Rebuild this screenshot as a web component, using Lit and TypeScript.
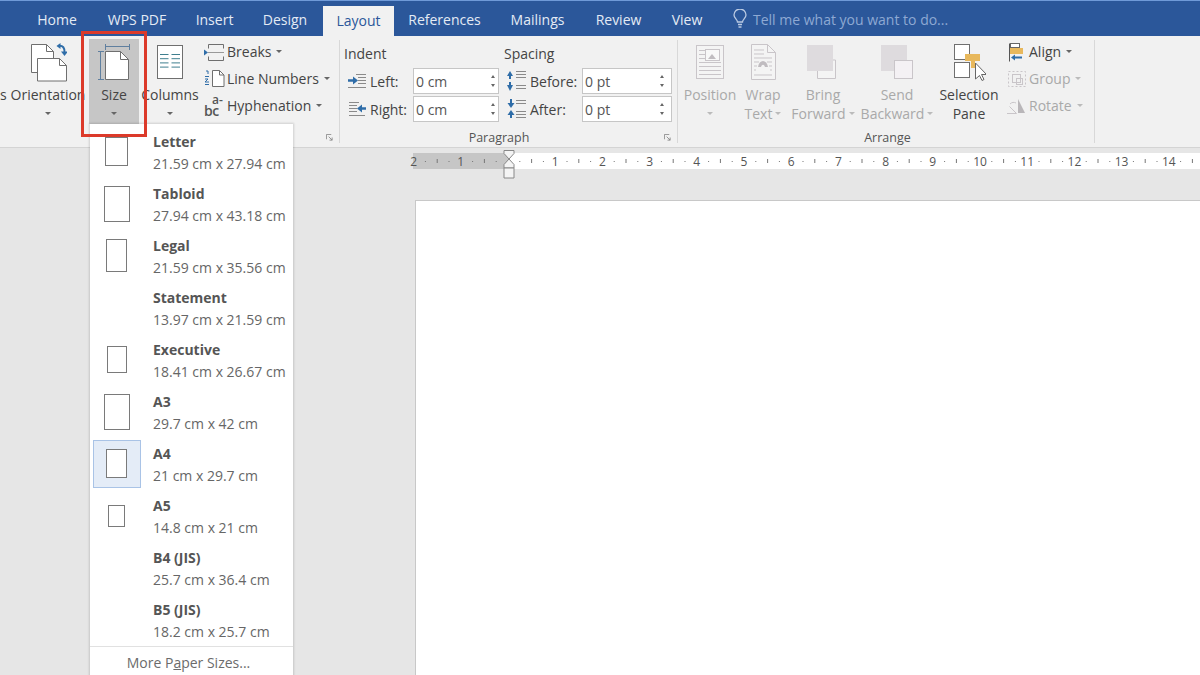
import { LitElement, html, css, svg } from "lit";
import { customElement } from "lit/decorators.js";

const tabs: [string, number][] = [
  ["Home", 70], ["WPS PDF", 90], ["Insert", 65], ["Design", 76], ["Layout", 71],
  ["References", 101], ["Mailings", 85], ["Review", 77], ["View", 60],
];

const papers: { name: string; dim: string; w?: number; h?: number; on?: boolean }[] = [
  { name: "Letter", dim: "21.59 cm x 27.94 cm", w: 23, h: 29 },
  { name: "Tabloid", dim: "27.94 cm x 43.18 cm", w: 26, h: 36 },
  { name: "Legal", dim: "21.59 cm x 35.56 cm", w: 21, h: 33 },
  { name: "Statement", dim: "13.97 cm x 21.59 cm" },
  { name: "Executive", dim: "18.41 cm x 26.67 cm", w: 20, h: 27 },
  { name: "A3", dim: "29.7 cm x 42 cm", w: 26, h: 36 },
  { name: "A4", dim: "21 cm x 29.7 cm", w: 21, h: 29, on: true },
  { name: "A5", dim: "14.8 cm x 21 cm", w: 17, h: 22 },
  { name: "B4 (JIS)", dim: "25.7 cm x 36.4 cm" },
  { name: "B5 (JIS)", dim: "18.2 cm x 25.7 cm" },
];

const icon = (x: number, y: number, w: number, h: number, body: unknown) => html`<svg
  width=${w} height=${h} viewBox="${x} ${y} ${w} ${h}" fill="none">${body}</svg>`;

const LINE = "#6f6f6f";
const BLUE = "#2f6da8";
const DIS = "#c9c5c9";

const orientationIcon = icon(29, 42, 38, 40, svg`
  <path d="M31.5 44.5h15l7 7v21h-22z" fill="#fff" stroke=${LINE}/>
  <path d="M46.5 44.5v7h7" stroke=${LINE}/>
  <path d="M37.5 58.5h22l7 7v15.5h-29z" fill="#fff" stroke=${LINE}/>
  <path d="M59.5 58.5v7h7" stroke=${LINE}/>
  <path d="M58 46c5-1 7 2 6.500 7" stroke=${BLUE} stroke-width="2"/>
  <path d="M61 51.500h7l-3.500 4.500z" fill=${BLUE}/>
  <path d="M60.500 43v6l-4-3z" fill=${BLUE}/>`);

const sizeIcon = icon(98, 43, 32, 39, svg`
  <path d="M105.500 44v6M129.500 44v6M105.500 46.500h24" stroke="#5f7f9f"/>
  <path d="M98 51.500h6M98 79.500h6M100.500 51.500v28" stroke="#5f7f9f"/>
  <path d="M105.500 51.500h15l8 8v20h-23z" fill="#fff" stroke=${LINE}/>
  <path d="M120.500 51.500v8h8" stroke=${LINE}/>`);

const columnLines = [0, 1, 2, 3].map((i) => svg`
  <path d="M160 ${54.5 + i * 4.2}h8.500M171.500 ${54.5 + i * 4.2}h8.500" stroke="#3f7f8f"/>`);
const columnsIcon = icon(155, 44, 30, 38, svg`
  <rect x="157.500" y="45.500" width="25" height="33" fill="#fff" stroke=${LINE}/>${columnLines}`);

const breaksIcon = icon(204, 43, 21, 19, svg`
  <path d="M208.500 44.500h15M208.500 60.500h15M208.500 44.500v4M223.500 44.500v4M208.500 56.500v4M223.500 56.500v4" stroke=${LINE}/>
  <path d="M208 52.500h16" stroke="#999"/>
  <path d="M204 49.500l4 3-4 3z" fill=${BLUE}/>`);

const lineNumIcon = icon(204, 70, 21, 19, svg`
  <path d="M212.500 70.500h7l4.500 4.500v11.500h-11.500z" fill="#fff" stroke=${LINE}/>
  <path d="M219.500 70.500v4.500h4.500" stroke=${LINE}/>
  <path d="M206 71h2v3M205 76.500h4M205 79h3l-3 3h4M205 84.500h4" stroke=${BLUE}/>`);

const leftIndent = icon(347, 73, 20, 16, svg`
  <path d="M356 74.500h10M358 77.500h8M358 80.500h8M358 83.500h8M348 87.500h18" stroke="#8a8a8a"/>
  <path d="M348 80.500h6" stroke=${BLUE} stroke-width="2.500"/>
  <path d="M353 76.500l5 4-5 4z" fill=${BLUE}/>`);
const rightIndent = icon(347, 101, 20, 16, svg`
  <path d="M349 102.500h10M349 105.500h8M349 108.500h8M349 111.500h8M349 115.500h16" stroke="#8a8a8a"/>
  <path d="M360 108.500h6" stroke=${BLUE} stroke-width="2.500"/>
  <path d="M362 104.500l-5 4 5 4z" fill=${BLUE}/>`);
const beforeIcon = icon(506, 70, 21, 22, svg`
  <path d="M516 71.500h10M516 74.500h10M516 77.500h10M516 85.500h10M516 88.500h10" stroke="#8a8a8a"/>
  <path d="M510 74v5" stroke=${BLUE} stroke-width="2"/><path d="M507 76l3-5 3 5z" fill=${BLUE}/>
  <path d="M510 82v5" stroke=${BLUE} stroke-width="2"/><path d="M507 85l3 6 3-6z" fill=${BLUE}/>`);
const afterIcon = icon(506, 98, 21, 22, svg`
  <path d="M516 100.500h10M516 103.500h10M516 111.500h10M516 114.500h10M516 117.500h10" stroke="#8a8a8a"/>
  <path d="M511 99v5" stroke=${BLUE} stroke-width="2"/><path d="M507.500 103l3.500 5 3.500-5z" fill=${BLUE}/>
  <path d="M511 113v5" stroke=${BLUE} stroke-width="2"/><path d="M507.500 115l3.500-5 3.500 5z" fill=${BLUE}/>`);

const positionIcon = icon(695, 44, 30, 38, svg`
  <rect x="696.500" y="45.500" width="27" height="33" fill="#f4f4f4" stroke=${DIS}/>
  <path d="M699 50.500h6M699 54.500h6M699 58.500h6M699 62.500h22M699 66.500h22M699 70.500h22M699 74.500h22" stroke=${DIS}/>
  <rect x="705.500" y="49.500" width="14" height="11" fill="#f8f8f8" stroke=${DIS}/>
  <path d="M708 59l4-5 4 5z" fill="#c0bcc0"/>`);
const wrapIcon = icon(749, 43, 28, 39, svg`
  <path d="M751.500 44.500h16l8 8v27h-24z" fill="#f4f4f4" stroke=${DIS}/>
  <path d="M767.500 44.500v8h8" stroke=${DIS}/>
  <path d="M754 50h10M754 54h10M754 58h18M754 62h5M767 62h5M754 66h3M769 66h3M754 70h2M770 70h2M754 75h18" stroke=${DIS}/>
  <path d="M758 67c1-8 9-8 10 0h-3c-1-3-3-3-4 0z" fill="#c0bcc0"/>`);
const bringIcon = icon(806, 44, 34, 38, svg`
  <path d="M823 60h12.500v18.500h-18v-13" fill="#f4f4f4" stroke=${DIS}/>
  <rect x="807" y="45" width="26" height="26" fill="#dedbde"/>`);
const sendIcon = icon(880, 44, 34, 38, svg`
  <rect x="881" y="45" width="26" height="26" fill="#dedbde"/>
  <rect x="894.500" y="60.500" width="18" height="18" fill="#f4f1f4" stroke=${DIS}/>`);
const selectionIcon = icon(952, 43, 34, 39, svg`
  <rect x="954.500" y="44.500" width="15" height="15" fill="#fff" stroke=${LINE}/>
  <rect x="954.500" y="62.500" width="15" height="15" fill="#fff" stroke=${LINE}/>
  <rect x="965" y="54" width="15" height="7" fill="#e8b85c"/>
  <rect x="971" y="61" width="4" height="7" fill="#e8b85c"/>
  <path d="M975.500 63v16l4-3.500 2.500 5 2-1-2.500-5h5z" fill="#fff" stroke="#666"/>`);
const alignIcon = icon(1006, 43, 21, 19, svg`
  <path d="M1009.500 43.500v18" stroke="#555"/>
  <rect x="1010.500" y="43.500" width="9" height="4" fill="#fff" stroke="#666"/>
  <rect x="1010" y="48" width="13" height="6" fill="#e8b85c"/>
  <path d="M1014 57.500h8" stroke=${BLUE} stroke-width="2"/><path d="M1011 57.500l4-3v6z" fill=${BLUE}/>`);
const groupIcon = icon(1006, 70, 21, 19, svg`
  <rect x="1008.500" y="71.500" width="17" height="15" stroke=${DIS} stroke-dasharray="2 2"/>
  <rect x="1012.500" y="74.500" width="8" height="8" stroke=${DIS}/>
  <rect x="1016.500" y="78.500" width="6" height="6" stroke=${DIS}/>`);
const rotateIcon = icon(1006, 98, 21, 17, svg`
  <path d="M1007 113.500h9.500l-7-7M1010 104c2-2 4-2 6-1" stroke=${DIS}/>
  <path d="M1018 113V99l7 14z" fill="#b9b6b9"/>`);

const launcher = html`<svg class="launch" width="7" height="7" viewBox="0 0 8 8" fill="none">
  <path d="M.5 6V.5H6" stroke="#888"/><path d="M3 3l4 4M7 4v3H4" stroke="#888"/></svg>`;

const bulb = html`<svg width="14" height="20" viewBox="0 0 14 20" fill="none" stroke="#b9c9e2" stroke-width="1.300">
  <path d="M4.500 13c0-2.500-3.500-4-3.500-7a6 6 0 0 1 12 0c0 3-3.500 4.500-3.500 7z"/><path d="M5 15.500h4M5.500 18h3"/></svg>`;

const rulerMarks = () => {
  const out: unknown[] = [];
  const unit = 47.2;
  for (let n = -2; n <= 14; n++) {
    const x = 95 + n * unit;
    const label = Math.abs(n);
    if (n !== 0) out.push(svg`<text x=${x} y="13" text-anchor="middle" class="rn">${label}</text>`);
    out.push(svg`<rect x=${x + unit * 0.25 - 0.5} y="8" width="1" height="1" fill="#777"/>`);
    out.push(svg`<rect x=${x + unit * 0.5 - 0.5} y="6" width="1" height="4" fill="#777"/>`);
    out.push(svg`<rect x=${x + unit * 0.75 - 0.5} y="8" width="1" height="1" fill="#777"/>`);
  }
  return out;
};

@customElement("app-root")
export class AppRoot extends LitElement {
  static styles = css`
    :host {
      display: block; width: 1200px; height: 675px; overflow: hidden; position: relative;
      font-family: "Open Sans", "Noto Sans", sans-serif; font-size: 14px; color: #444;
      background: #e6e6e6;
    }
    svg { display: block; flex: none; }
    .tabbar {
      height: 36px; background: #2b579a; border-top: 1px solid #6f9ad8; box-sizing: border-box;
      display: flex; padding-left: 22px; color: #e4ebf5;
    }
    .tab { display: flex; align-items: center; justify-content: center; height: 35px; white-space: nowrap; box-sizing: border-box; padding-top: 2px; }
    .tab.active { background: #f1f1f1; color: #2b579a; margin-top: 5px; height: 30px; padding: 0 0 2px; }
    .tell { display: flex; align-items: center; gap: 6px; margin-left: 16px; color: #8ea9d3; height: 35px; box-sizing: border-box; padding-top: 1px; }
    .tell span { padding-top: 1px; }
    .ribbon {
      height: 112px; box-sizing: border-box; background: #f1f1f1; border-bottom: 1px solid #d4d4d4;
      display: flex; align-items: stretch;
    }
    .group { display: flex; flex-direction: column; position: relative; box-sizing: border-box; }
    .group::after {
      content: ""; position: absolute; right: 0; top: 4px; bottom: 4px; width: 1px; background: #d8d8d8;
    }
    .g1 { width: 340px; } .g2 { width: 338px; padding-left: 4px; } .g3 { width: 417px; padding-left: 2px; }
    .body { display: flex; flex: 1; min-height: 0; padding-top: 3px; }
    .glabel {
      height: 22px; display: flex; align-items: center; justify-content: center;
      font-size: 12.500px; color: #555; position: relative; padding-top: 2px; box-sizing: border-box;
    }
    .g2 .glabel { padding-right: 24px; }
    .launch { position: absolute; right: 7px; top: 9px; }
    .big { display: flex; flex-direction: column; align-items: center; height: 85px; flex: none; white-space: nowrap; }
    .ico { height: 46px; display: flex; align-items: flex-end; justify-content: center; padding-bottom: 3px; box-sizing: border-box; }
    .line { height: 20px; line-height: 20px; display: flex; align-items: center; gap: 3px; }
    .line + .line { height: 19px; margin-top: -1px; }
    .caret { width: 0; height: 0; border: 3px solid transparent; border-top: 3.500px solid #666; border-bottom: 0; flex: none; }
    .big.dis, .small.dis { color: #a9a9a9; }
    .dis .caret { border-top-color: #bbb; }
    .sel { background: #c6c6c6; margin-left: 3px; }
    .clip { width: 10px; overflow: hidden; line-height: 20px; padding-top: 46px; height: 20px; flex: none; }
    .stack { display: flex; flex-direction: column; margin-top: -1px; flex: none; }
    .small { height: 27px; display: flex; align-items: center; gap: 2px; white-space: nowrap; }
    .small svg { margin-top: 2px; }
    .small .caret { margin-left: 3px; }
    .hy { width: 21px; height: 21px; color: #555; flex: none; font-weight: 600; }
    .hy span { display: block; }
    .hy .a { font-size: 12px; line-height: 10px; height: 10px; margin-left: 8px; }
    .hy .b { font-size: 14px; line-height: 11px; height: 11px; margin-top: 0; letter-spacing: -.5px; }
    .para { display: grid; grid-template-columns: 160px 170px; grid-template-rows: 25px 28px 28px; padding-top: 6px; flex: 1; }
    .phead { font-size: 14px; display: flex; align-items: center; height: 22px; }
    .prow { display: flex; align-items: center; height: 28px; }
    .plabel { display: flex; align-items: center; gap: 3px; white-space: nowrap; }
    .plabel.l { width: 69px; padding-left: 3px; box-sizing: border-box; }
    .plabel.r { width: 78px; padding-left: 2px; box-sizing: border-box; }
    .spin {
      box-sizing: border-box; height: 26px; background: #fff; border: 1px solid #c6c6c6;
      display: flex; align-items: center; justify-content: space-between; padding: 0 3px 0 2px; color: #555;
    }
    .spin.a { width: 86px; } .spin.b { width: 90px; padding-right: 7px; }
    .arrows { display: flex; flex-direction: column; gap: 6px; }
    .arrows i { display: block; width: 0; height: 0; border: 2px solid transparent; }
    .arrows i:first-child { border-bottom: 3px solid #666; border-top: 0; }
    .arrows i:last-child { border-top: 3px solid #666; border-bottom: 0; }
    .work { height: 527px; background: #e6e6e6; padding-left: 413px; padding-top: 5px; box-sizing: border-box; overflow: hidden; }
    .ruler { width: 787px; height: 16px; display: block; overflow: visible; }
    .rn { font: 12px "Open Sans", sans-serif; fill: #555; }
    .page { width: 790px; height: 500px; margin: 31px 0 0 2px; background: #fff; border: 1px solid #c8c8c8; box-sizing: border-box; }
    .menu {
      position: absolute; left: 90px; top: 124px; width: 203px; height: 560px; background: #fff;
      box-shadow: 0 0 2px 1px rgba(0,0,0,.14); padding: 2px 3px 0; box-sizing: border-box;
    }
    .item { height: 52px; display: flex; align-items: center; }
    .thumb { width: 48px; height: 48px; box-sizing: border-box; display: flex; align-items: center; justify-content: center; flex: none; border: 1px solid transparent; padding: 0 1px 1px 0; }
    .item.on .thumb { background: #e4ecf7; border-color: #a9c3e6; }
    .thumb b { display: block; background: #fff; border: 1px solid #7a7a7a; box-sizing: border-box; }
    .txt { margin-left: 12px; display: flex; flex-direction: column; white-space: nowrap; padding-top: 2px; }
    .nm { font-weight: 700; color: #555; line-height: 22px; }
    .dm { color: #666; line-height: 22px; }
    .more { border-top: 1px solid #e1e1e1; margin: 0 -3px; height: 31px; display: flex; align-items: center; justify-content: center; color: #6b6b6b; padding-right: 6px; }
    .redbox { position: absolute; left: 81px; top: 31px; width: 66px; height: 106px; border: 3px solid #dc3a2a; box-sizing: border-box; pointer-events: none; }
    .ruler-marker { position: absolute; left: 503px; top: 150px; }
  `;

  render() {
    return html`
      <div class="tabbar">
        ${tabs.map(([t, w]) => html`<div class="tab ${t === "Layout" ? "active" : ""}" style="width:${w}px">${t}</div>`)}
        <div class="tell">${bulb}<span>Tell me what you want to do...</span></div>
      </div>

      <div class="ribbon">
        <section class="group g1">
          <div class="body">
            <div class="clip">s</div>
            <div class="big" style="width:76px">
              <div class="ico">${orientationIcon}</div><div class="line">Orientation</div><div class="line"><i class="caret"></i></div>
            </div>
            <div class="big sel" style="width:50px">
              <div class="ico">${sizeIcon}</div><div class="line">Size</div><div class="line"><i class="caret"></i></div>
            </div>
            <div class="big" style="width:62px">
              <div class="ico">${columnsIcon}</div><div class="line">Columns</div><div class="line"><i class="caret"></i></div>
            </div>
            <div class="stack" style="margin-left:3px">
              <div class="small">${breaksIcon}<span>Breaks</span><i class="caret"></i></div>
              <div class="small">${lineNumIcon}<span>Line Numbers</span><i class="caret"></i></div>
              <div class="small"><div class="hy"><span class="a">a-</span><span class="b">bc</span></div><span>Hyphenation</span><i class="caret"></i></div>
            </div>
          </div>
          <div class="glabel">${launcher}</div>
        </section>

        <section class="group g2">
          <div class="para">
            <div class="phead">Indent</div><div class="phead">Spacing</div>
            <div class="prow"><div class="plabel l">${leftIndent}<span>Left:</span></div><div class="spin a">0 cm<span class="arrows"><i></i><i></i></span></div></div>
            <div class="prow"><div class="plabel r">${beforeIcon}<span>Before:</span></div><div class="spin b">0 pt<span class="arrows"><i></i><i></i></span></div></div>
            <div class="prow"><div class="plabel l">${rightIndent}<span>Right:</span></div><div class="spin a">0 cm<span class="arrows"><i></i><i></i></span></div></div>
            <div class="prow"><div class="plabel r">${afterIcon}<span>After:</span></div><div class="spin b">0 pt<span class="arrows"><i></i><i></i></span></div></div>
          </div>
          <div class="glabel">Paragraph${launcher}</div>
        </section>

        <section class="group g3">
          <div class="body">
            <div class="big dis" style="width:60px"><div class="ico">${positionIcon}</div><div class="line">Position</div><div class="line"><i class="caret"></i></div></div>
            <div class="big dis" style="width:46px"><div class="ico">${wrapIcon}</div><div class="line">Wrap</div><div class="line">Text<i class="caret"></i></div></div>
            <div class="big dis" style="width:74px"><div class="ico">${bringIcon}</div><div class="line">Bring</div><div class="line">Forward<i class="caret"></i></div></div>
            <div class="big dis" style="width:74px"><div class="ico">${sendIcon}</div><div class="line">Send</div><div class="line">Backward<i class="caret"></i></div></div>
            <div class="big" style="width:70px"><div class="ico">${selectionIcon}</div><div class="line">Selection</div><div class="line">Pane</div></div>
            <div class="stack" style="margin-left:2px">
              <div class="small">${alignIcon}<span>Align</span><i class="caret"></i></div>
              <div class="small dis">${groupIcon}<span>Group</span><i class="caret"></i></div>
              <div class="small dis">${rotateIcon}<span>Rotate</span><i class="caret"></i></div>
            </div>
          </div>
          <div class="glabel">Arrange</div>
        </section>
      </div>

      <div class="work">
        <svg class="ruler" viewBox="0 0 787 16">
          <rect width="95" height="16" fill="#c6c6c6"/>
          <rect x="95" width="692" height="16" fill="#fff"/>
          ${rulerMarks()}
        </svg>
        <div class="page"></div>
      </div>

      <svg class="ruler-marker" width="12" height="29" viewBox="0 0 12 29" fill="#f4f4f4" stroke="#888">
        <path d="M1 .5h10v3l-5 5.500-5-5.500z"/><path d="M6 9l5 5.500v3.500H1v-3.500z"/><path d="M1 18h10v10H1z"/>
      </svg>

      <div class="menu">
        ${papers.map((p) => html`
          <div class="item ${p.on ? "on" : ""}">
            <div class="thumb">${p.w ? html`<b style="width:${p.w}px;height:${p.h}px"></b>` : ""}</div>
            <div class="txt"><span class="nm">${p.name}</span><span class="dm">${p.dim}</span></div>
          </div>`)}
        <div class="more"><span>More P<u>a</u>per Sizes...</span></div>
      </div>
      <div class="redbox"></div>
    `;
  }
}
